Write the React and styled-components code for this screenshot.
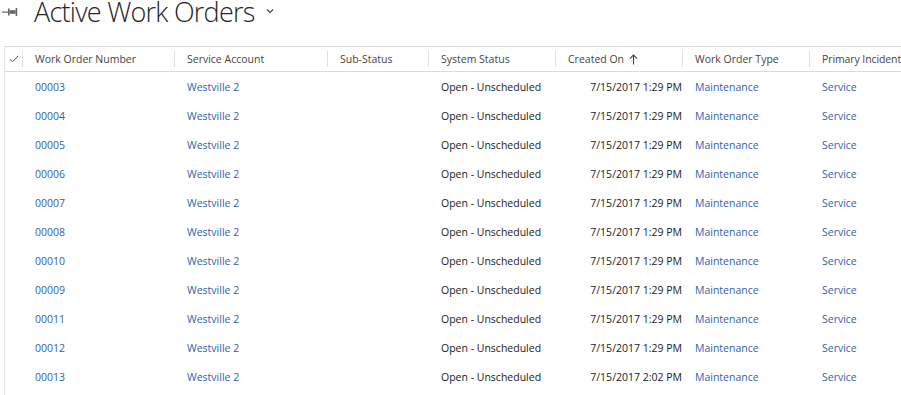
import React from "react";
import styled, { createGlobalStyle } from "styled-components";

const GlobalStyle = createGlobalStyle`
  body {
    margin: 0;
    background: #fff;
    font-family: "Segoe UI", "Open Sans", sans-serif;
    overflow: hidden;
  }
`;

const COLS = "18px 152px 153px 101px 127px 127px 127px 1fr";

const Page = styled.div`
  width: 901px;
  height: 395px;
  overflow: hidden;
`;

const TitleBar = styled.div`
  display: flex;
  align-items: flex-start;
  height: 46px;
  padding-left: 2px;
`;

const Pin = styled.svg`
  margin-top: 7px;
`;

const Title = styled.h1`
  margin: -1px 0 0 15px;
  font-size: 27px;
  line-height: 26px;
  letter-spacing: -0.75px;
  font-weight: 300;
  color: #262626;
  white-space: nowrap;
`;

const Chevron = styled.svg`
  margin-left: 11px;
  margin-top: 8px;
`;

const Grid = styled.div`
  margin-left: 4px;
  border-top: 1px solid #dcdcdc;
  border-left: 1px solid #e6e6e6;
  height: 360px;
`;

const HeaderRow = styled.div`
  display: grid;
  grid-template-columns: ${COLS};
  height: 24px;
  border-bottom: 1px solid #dcdcdc;
  align-items: center;
`;

const HeaderCell = styled.div`
  position: relative;
  height: 100%;
  display: flex;
  align-items: center;
  padding-left: ${p => (p.$first ? "0" : "12px")};
  justify-content: ${p => (p.$center ? "center" : "flex-start")};
  font-size: 10.5px;
  letter-spacing: ${p => (p.$last ? "-0.1px" : "0")};
  color: #444;
  white-space: nowrap;
  overflow: ${p => (p.$last ? "visible" : "hidden")};

  &::after {
    content: "";
    display: ${p => (p.$last ? "none" : "block")};
    position: absolute;
    right: 0;
    top: 4px;
    bottom: 4px;
    width: 1px;
    background: #e0e0e0;
  }
`;

const SortArrow = styled.svg`
  margin-left: 5px;
`;

const Row = styled.div`
  display: grid;
  grid-template-columns: ${COLS};
  height: 29px;
  align-items: center;
`;

const Cell = styled.div`
  padding-left: ${p => (p.$right ? "0" : "12px")};
  padding-right: ${p => (p.$right ? "1px" : "0")};
  text-align: ${p => (p.$right ? "right" : "left")};
  font-size: 10.5px;
  color: ${p => (p.$link ? "#3361ad" : "#1a1a1a")};
  white-space: nowrap;
  overflow: hidden;
`;

const columns = [
  "Work Order Number",
  "Service Account",
  "Sub-Status",
  "System Status",
  "Created On",
  "Work Order Type",
  "Primary Incident",
];

const rows = [
  ["00003", "1:29 PM"],
  ["00004", "1:29 PM"],
  ["00005", "1:29 PM"],
  ["00006", "1:29 PM"],
  ["00007", "1:29 PM"],
  ["00008", "1:29 PM"],
  ["00010", "1:29 PM"],
  ["00009", "1:29 PM"],
  ["00011", "1:29 PM"],
  ["00012", "1:29 PM"],
  ["00013", "2:02 PM"],
];

export default function App() {
  return (
    <Page>
      <GlobalStyle />
      <TitleBar>
        <Pin width="17" height="10" viewBox="0 0 17 10">
          <rect x="0" y="4.5" width="6" height="1.2" fill="#666" />
          <rect x="6" y="1.5" width="1.6" height="7" fill="#666" />
          <rect x="7.6" y="3.2" width="6" height="3.6" fill="#666" />
          <rect x="13.6" y="1" width="1.6" height="8" fill="#666" />
        </Pin>
        <Title>Active Work Orders</Title>
        <Chevron width="8" height="6" viewBox="0 0 8 6">
          <path d="M1 1.5 L4 4.5 L7 1.5" fill="none" stroke="#555" strokeWidth="1.4" />
        </Chevron>
      </TitleBar>
      <Grid>
        <HeaderRow>
          <HeaderCell $first $center>
            <svg width="10" height="8" viewBox="0 0 10 8">
              <path d="M0.8 4 L3.5 6.8 L9.2 0.8" fill="none" stroke="#555" strokeWidth="1" />
            </svg>
          </HeaderCell>
          {columns.map((c, i) => (
            <HeaderCell key={c} $last={i === columns.length - 1}>
              {c}
              {c === "Created On" && (
                <SortArrow width="9" height="11" viewBox="0 0 9 11">
                  <path d="M4.5 10.5 V1 M0.8 4.7 L4.5 1 L8.2 4.7" fill="none" stroke="#444" strokeWidth="1.1" />
                </SortArrow>
              )}
            </HeaderCell>
          ))}
        </HeaderRow>
        {rows.map(([num, time]) => (
          <Row key={num}>
            <Cell />
            <Cell $link>{num}</Cell>
            <Cell $link>Westville 2</Cell>
            <Cell />
            <Cell>Open - Unscheduled</Cell>
            <Cell $right>7/15/2017 {time}</Cell>
            <Cell $link>Maintenance</Cell>
            <Cell $link>Service</Cell>
          </Row>
        ))}
      </Grid>
    </Page>
  );
}
